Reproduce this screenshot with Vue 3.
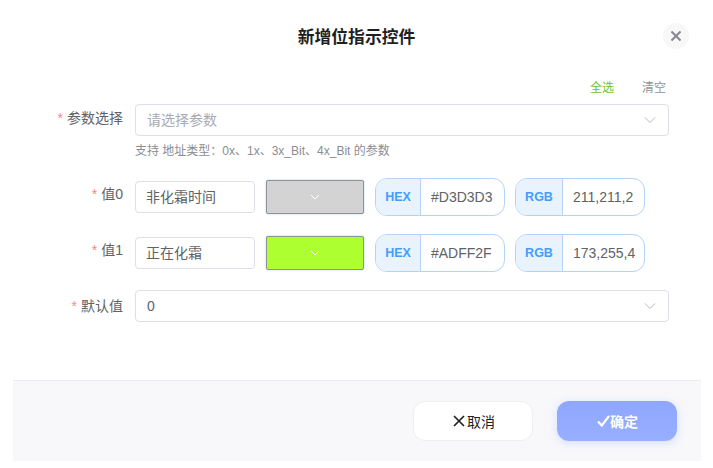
<template>
  <div class="dialog">
    <header class="head">
      <h2 class="title">新增位指示控件</h2>
      <button class="close" type="button" aria-label="关闭">
        <svg width="12" height="12" viewBox="0 0 12 12">
          <path d="M1.5 1.5l9 9M10.5 1.5l-9 9" stroke="#8a8a90" stroke-width="2.2" fill="none" />
        </svg>
      </button>
    </header>

    <div class="form">
      <div class="links">
        <span class="all">全选</span>
        <span class="clear">清空</span>
      </div>

      <div class="row">
        <label class="label"><i>*</i>参数选择</label>
        <div class="select placeholder">
          <span>请选择参数</span>
          <svg class="arrow" width="12" height="8" viewBox="0 0 12 8">
            <path d="M1 1.5l5 5 5-5" stroke="#b4b6bc" stroke-width="1" fill="none" />
          </svg>
        </div>
      </div>
      <p class="hint">支持 地址类型：0x、1x、3x_Bit、4x_Bit 的参数</p>

      <div v-for="item in values" :key="item.label" class="row value-row">
        <label class="label"><i>*</i>{{ item.label }}</label>
        <div class="input">{{ item.text }}</div>
        <div class="swatch" :style="{ backgroundColor: item.hex }">
          <svg width="10" height="6" viewBox="0 0 10 6">
            <path d="M1 1l4 4 4-4" stroke="#fff" stroke-width="1" fill="none" />
          </svg>
        </div>
        <div class="code">
          <span class="tag hex">HEX</span>
          <span class="val">{{ item.hex }}</span>
        </div>
        <div class="code">
          <span class="tag rgb">RGB</span>
          <span class="val">{{ item.rgb }}</span>
        </div>
      </div>

      <div class="row default-row">
        <label class="label"><i>*</i>默认值</label>
        <div class="select">
          <span>0</span>
          <svg class="arrow" width="12" height="8" viewBox="0 0 12 8">
            <path d="M1 1.5l5 5 5-5" stroke="#b4b6bc" stroke-width="1" fill="none" />
          </svg>
        </div>
      </div>
    </div>

    <footer class="foot">
      <button class="btn cancel" type="button">
        <svg width="12" height="12" viewBox="0 0 12 12">
          <path d="M1 1l10 10M11 1L1 11" stroke="#222" stroke-width="1.7" fill="none" />
        </svg>取消
      </button>
      <button class="btn ok" type="button">
        <svg width="13" height="12" viewBox="0 0 13 12">
          <path d="M1 6.5l3.8 4L12 1" stroke="#fff" stroke-width="2.2" fill="none" />
        </svg>确定
      </button>
    </footer>
  </div>
</template>

<script setup>
const values = [
  { label: '值0', text: '非化霜时间', hex: '#D3D3D3', rgb: '211,211,2' },
  { label: '值1', text: '正在化霜', hex: '#ADFF2F', rgb: '173,255,4' }
]
</script>

<style>
html,
body {
  background: #fff;
}
</style>

<style scoped>
.dialog {
  width: 713px;
  height: 468px;
  overflow: hidden;
  background: #fff;
  font-family: "Liberation Sans", "Noto Sans CJK SC", sans-serif;
  font-size: 14px;
  color: #606266;
}

.head {
  display: flex;
  justify-content: center;
  align-items: center;
  height: 32px;
  padding-top: 20px;
  position: relative;
}

.title {
  margin: 0;
  font-size: 16.8px;
  font-weight: 700;
  color: #1f1f1f;
}

.close {
  position: absolute;
  left: 663px;
  top: 23px;
  width: 26px;
  height: 26px;
  padding: 0;
  border: 0;
  border-radius: 50%;
  background: #f8f8f9;
  display: flex;
  align-items: center;
  justify-content: center;
}

.form {
  padding: 0 44px 0 0;
}

.links {
  display: flex;
  justify-content: flex-end;
  gap: 28px;
  height: 25px;
  margin-top: 27px;
  padding-right: 3px;
  font-size: 12px;
  line-height: 18px;
}

.all {
  color: #67c23a;
}

.clear {
  color: #909399;
}

.row {
  display: flex;
  align-items: flex-start;
}

.label {
  width: 123px;
  flex: none;
  margin-right: 12px;
  text-align: right;
  font-size: 14px;
  line-height: 28px;
  color: #606266;
}

.label i {
  font-style: normal;
  color: #f78989;
  margin-right: 4px;
}

.select {
  flex: 1;
  height: 32px;
  box-sizing: border-box;
  display: flex;
  align-items: center;
  justify-content: space-between;
  padding: 0 12px 0 11px;
  border: 1px solid #dcdfe6;
  border-radius: 4px;
  font-size: 14px;
}

.placeholder {
  color: #a8abb2;
}

.placeholder span {
  padding-bottom: 2px;
}

.hint {
  margin: 7px 0 19px 135px;
  font-size: 12px;
  line-height: 16px;
  color: #8a8d93;
}

.value-row {
  align-items: center;
  height: 38px;
  margin-top: 18px;
}

.value-row .label {
  line-height: 26px;
  margin-top: -6px;
}

.input {
  width: 120px;
  height: 32px;
  box-sizing: border-box;
  padding: 0 10px;
  border: 1px solid #dcdfe6;
  border-radius: 4px;
  font-size: 14px;
  line-height: 31px;
  margin-right: 11px;
}

.swatch {
  width: 98px;
  height: 34px;
  box-sizing: border-box;
  border: 1px solid #8f9297;
  border-radius: 2px;
  box-shadow: 0 0 2px #a9c4e6;
  display: flex;
  align-items: center;
  justify-content: center;
  margin-right: 11px;
}

.code {
  width: 130px;
  height: 38px;
  box-sizing: border-box;
  display: flex;
  border: 1px solid #b3d4f5;
  border-radius: 12px;
  overflow: hidden;
  margin-right: 10px;
  flex: none;
}

.tag {
  flex: none;
  box-sizing: border-box;
  display: flex;
  align-items: center;
  justify-content: center;
  background: #e9f3fe;
  border-right: 1px solid #b3d4f5;
  color: #409eff;
  font-size: 12.5px;
  font-weight: 700;
}

.hex {
  width: 45px;
}

.rgb {
  width: 47px;
}

.val {
  flex: 1;
  padding-left: 10px;
  font-size: 14px;
  line-height: 36px;
  white-space: nowrap;
  overflow: hidden;
}

.default-row {
  margin-top: 18px;
}

.default-row .label {
  line-height: 32px;
}

.foot {
  display: flex;
  justify-content: flex-end;
  gap: 24px;
  box-sizing: border-box;
  width: 688px;
  height: 81px;
  margin: 58px 0 0 13px;
  padding: 20px 24px 0 0;
  background: #f8f8fb;
  border-top: 1px solid #ebebf0;
}

.btn {
  width: 120px;
  height: 40px;
  box-sizing: border-box;
  padding: 0;
  display: flex;
  align-items: center;
  justify-content: center;
  border-radius: 12px;
  font-family: inherit;
  font-size: 14px;
}

.cancel {
  gap: 2px;
  padding-left: 2px;
  background: #fff;
  border: 1px solid #eeeef2;
  color: #222;
}

.ok {
  padding-left: 1px;
  background: linear-gradient(#8ea6ff, #98afff);
  border: 0;
  color: #fff;
  font-weight: 700;
  box-shadow: 0 2px 10px rgba(148, 171, 255, 0.35);
}
</style>
